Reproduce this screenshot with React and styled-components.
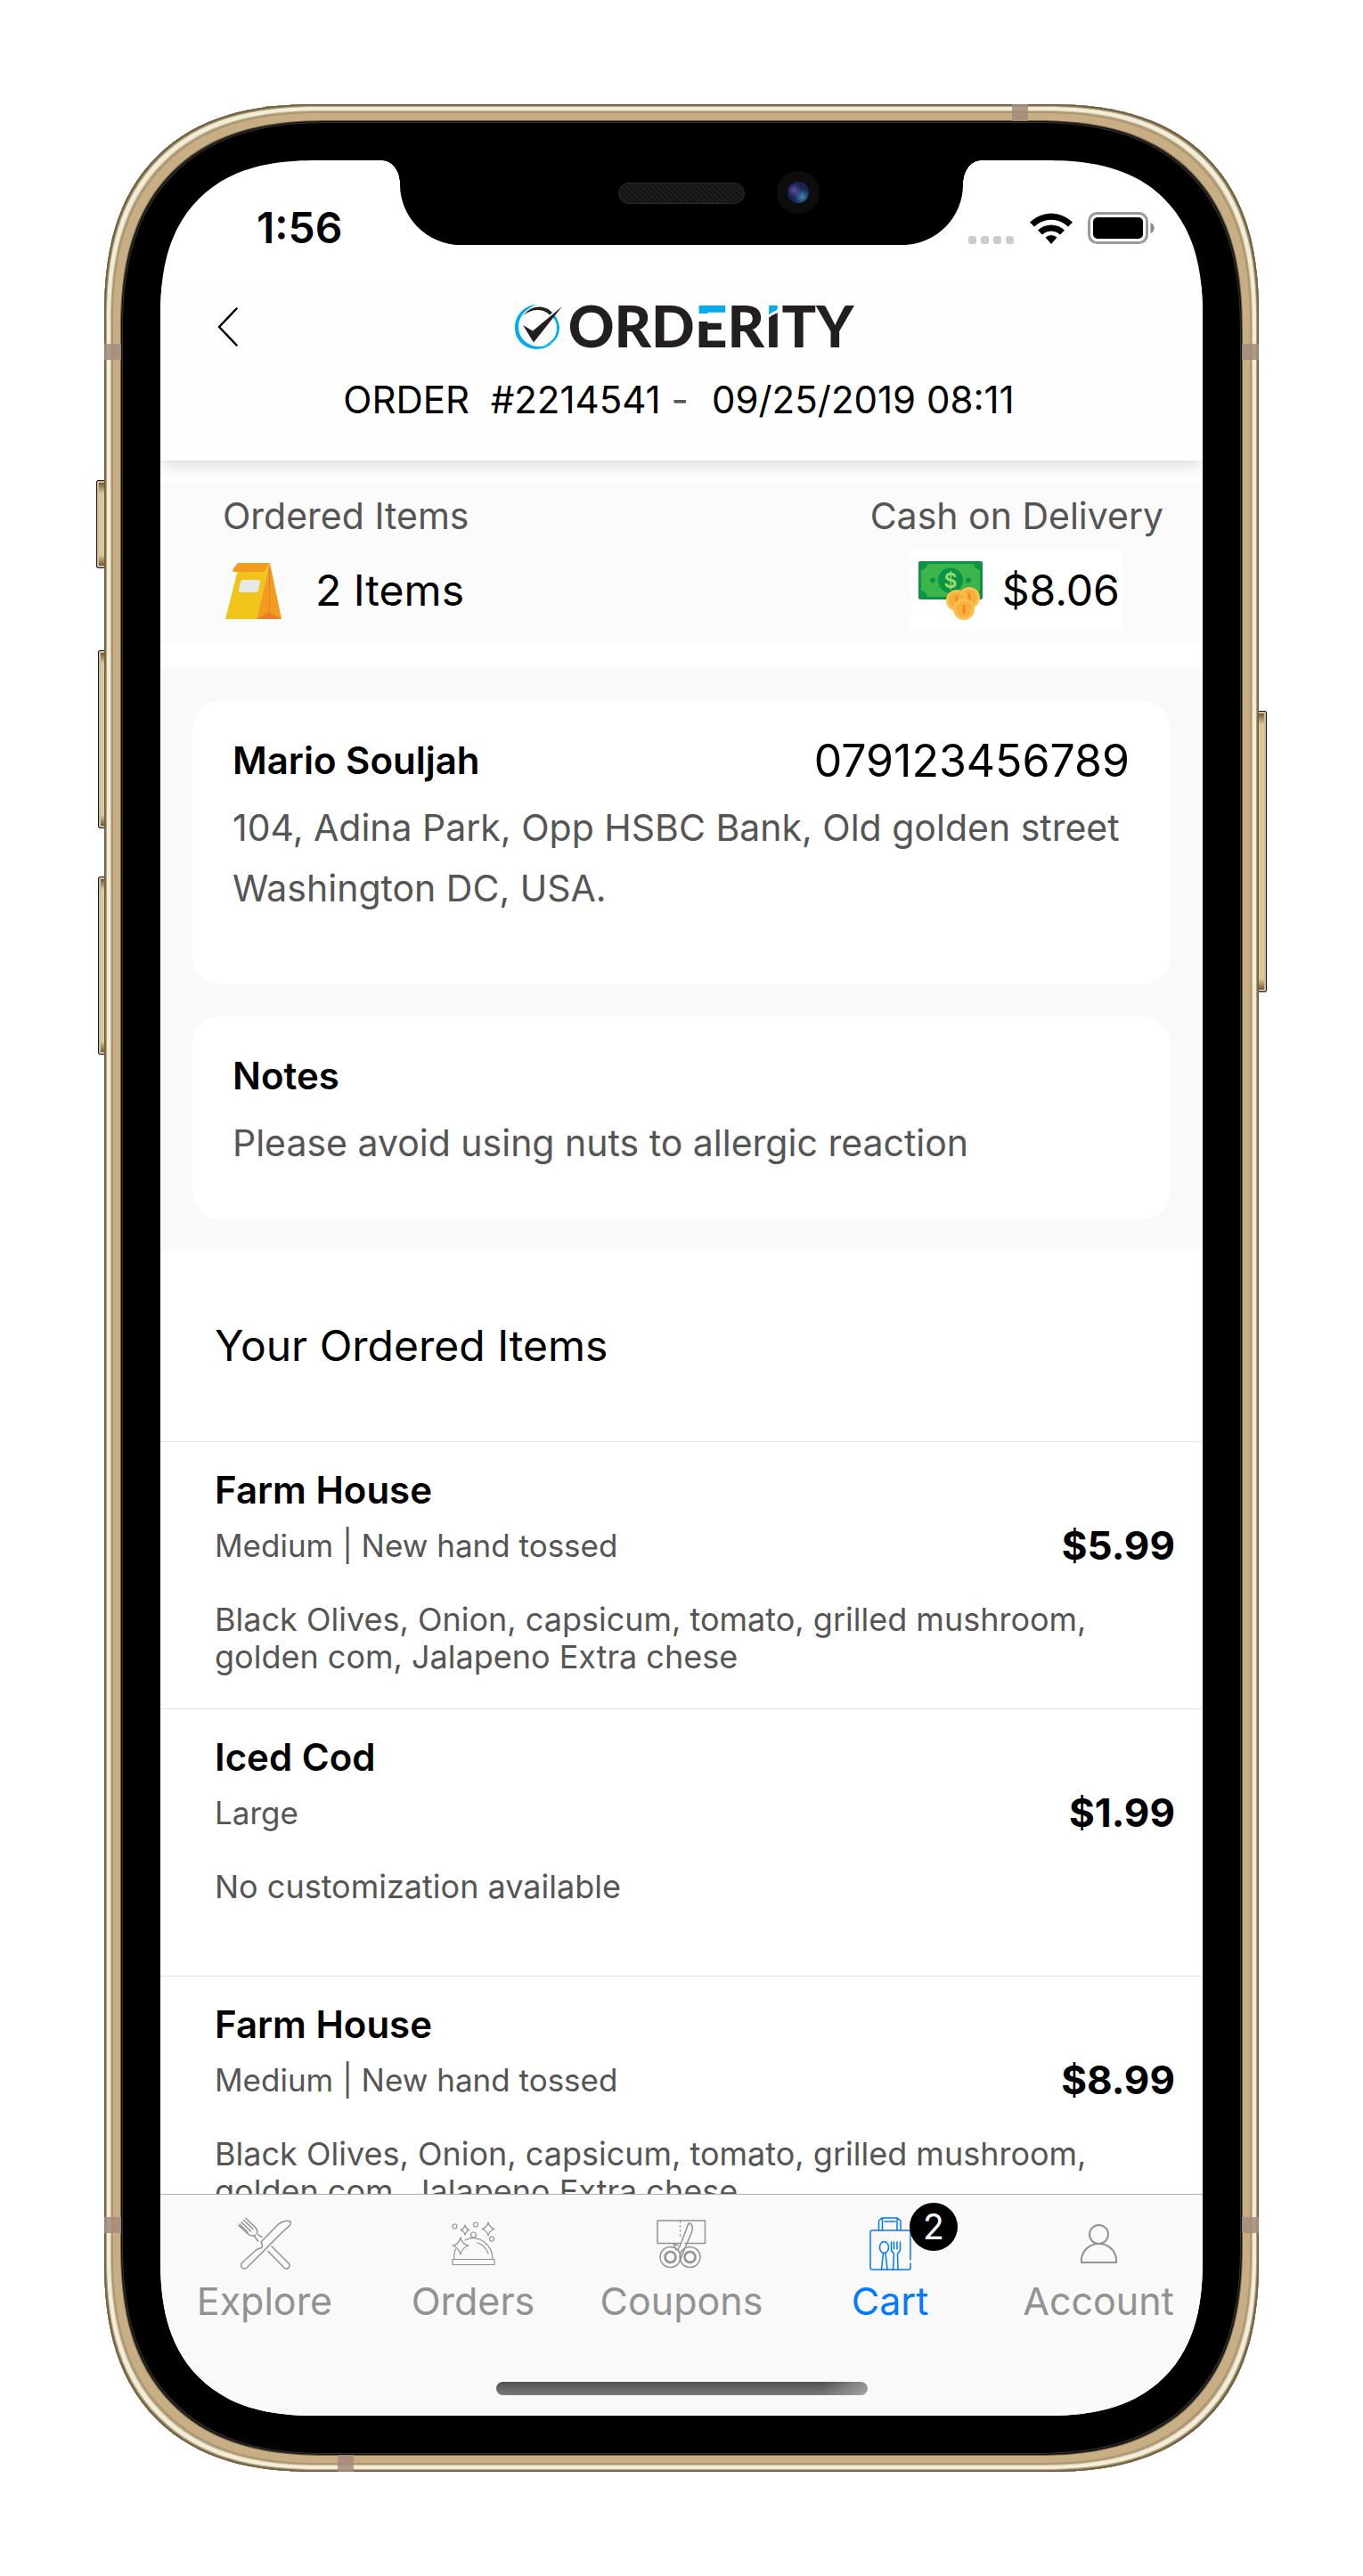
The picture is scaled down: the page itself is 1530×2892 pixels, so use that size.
import React from "react";
import styled, { createGlobalStyle, css } from "styled-components";

const GlobalStyle = createGlobalStyle`
  *, *::before, *::after { box-sizing: border-box; }
  body {
    margin: 0;
    background: #ffffff;
    color: #000000;
    font-family: Inter, "Liberation Sans", sans-serif;
  }
  h1, h2, h3, p, ul, dl, dd { margin: 0; padding: 0; }
  ul { list-style: none; }
`;

const Page = styled.div`
  display: flex;
  justify-content: center;
  padding: 117px;
`;

/* ---------- device ---------- */

const Phone = styled.div`
  position: relative;
  width: 100%;
  max-width: 1296px;
  padding: 63px;
`;

const Shell = styled.div`
  position: absolute;
  inset: 0;
  border-radius: 200px;
  background: #000000;
  box-shadow:
    inset 0 0 0 1px #6b5c3f,
    inset 0 0 0 2px #85734f,
    inset 0 0 0 3px #b0a27e,
    inset 0 0 0 7px #f2edd8,
    inset 0 0 0 8px #c8bc9c,
    inset 0 0 0 10px #ad9670,
    inset 0 0 0 18px #c8ae84,
    inset 0 0 0 19px #6e5c43,
    inset 0 0 0 20px #0d0d0d,
    inset 0 0 0 21px #333333;

  @supports (corner-shape: superellipse(1.3)) {
    border-radius: 240px;
    corner-shape: superellipse(1.3);
  }
`;

const SideButton = styled.span`
  position: absolute;
  top: ${(p) => p.$top}px;
  ${(p) => p.$side}: -${(p) => p.$depth}px;
  width: ${(p) => p.$depth + 4}px;
  height: ${(p) => p.$length}px;
  border: 1px solid #1c1a17;
  border-radius: 2px;
  background: linear-gradient(#5f4a1f, #dcc898 14px, #dcc898 calc(100% - 14px), #5f4a1f);
  box-shadow: inset 0 0 0 2px #cdb9a6;
`;

const Antenna = styled.span`
  position: absolute;
  background: rgba(165, 140, 125, 0.85);
  ${(p) => p.$edge}: 0;
  ${(p) =>
    p.$edge === "left" || p.$edge === "right"
      ? css`
          top: ${p.$at}px;
          width: 19px;
          height: 18px;
        `
      : css`
          left: ${p.$at}px;
          width: 18px;
          height: 19px;
        `}
`;

const Screen = styled.div`
  position: relative;
  display: flex;
  flex-direction: column;
  aspect-ratio: 1170 / 2532;
  overflow: hidden;
  border-radius: 142px;
  background: #ffffff;

  @supports (corner-shape: superellipse(1.3)) {
    border-radius: 176px;
    corner-shape: superellipse(1.3);
  }
`;

const Notch = styled.div`
  position: absolute;
  z-index: 3;
  top: 0;
  left: 50%;
  width: 632px;
  height: 95px;
  margin-left: -316px;
  border-radius: 0 0 68px 68px;
  background: #000000;

  &::before,
  &::after {
    content: "";
    position: absolute;
    top: 0;
    width: 20px;
    height: 26px;
  }
  &::before {
    right: 100%;
    background: radial-gradient(ellipse 20px 26px at 0 100%, transparent 98%, #000000 100%);
  }
  &::after {
    left: 100%;
    background: radial-gradient(ellipse 20px 26px at 100% 100%, transparent 98%, #000000 100%);
  }
`;

const Speaker = styled.span`
  position: absolute;
  top: 25px;
  left: 245px;
  width: 142px;
  height: 24px;
  border: 1px solid #2c2c2c;
  border-radius: 12px;
  background: repeating-linear-gradient(45deg, #141414 0 2px, #1e1e1e 2px 4px);
`;

const Camera = styled.span`
  position: absolute;
  top: 12px;
  left: 423px;
  width: 48px;
  height: 48px;
  border: 12px solid #0d0d0e;
  border-radius: 50%;
  background:
    radial-gradient(circle at 32% 40%, #6a4aa8 0, transparent 34%),
    radial-gradient(circle at 68% 70%, #3f87ad 0, transparent 40%),
    #16264f;
`;

/* ---------- status bar ---------- */

const StatusBar = styled.div`
  display: flex;
  justify-content: space-between;
  align-items: center;
  height: 141px;
  padding: 10px 53px 0 108px;
`;

const Clock = styled.span`
  font-size: 48px;
  font-weight: 600;
  line-height: 56px;
`;

const StatusIcons = styled.span`
  display: flex;
  align-items: flex-end;
  gap: 17px;
`;

/* ---------- header ---------- */

const Header = styled.header`
  position: relative;
  z-index: 1;
  padding-bottom: 40px;
  background: #fefefe;
  box-shadow: 0 8px 16px -2px rgba(0, 0, 0, 0.14);
`;

const HeaderBar = styled.div`
  display: grid;
  grid-template-columns: 1fr auto 1fr;
  align-items: center;
  height: 92px;
`;

const BackButton = styled.button`
  display: flex;
  justify-self: start;
  padding: 20px 20px 20px 64px;
  border: 0;
  background: none;
  cursor: pointer;
`;

const Logo = styled.div`
  display: flex;
  align-items: center;
  gap: 6px;
  padding-left: 6px;
`;

const Wordmark = styled.span`
  padding-bottom: 3px;
  color: #231f20;
  font-family: Lato, "Liberation Sans", sans-serif;
  font-size: 64px;
  font-weight: 900;
  line-height: 62px;
`;

const AccentLetter = styled.span`
  background: ${(p) => p.$fill};
  background-clip: text;
  -webkit-background-clip: text;
  color: transparent;
`;

const OrderLine = styled.p`
  display: flex;
  justify-content: center;
  margin-top: 8px;
  padding-right: 6px;
  font-size: 42px;
  line-height: 56px;
  white-space: pre;
`;

const Dash = styled.span`
  padding: 0 26px 0 12px;
  color: #555555;
`;

/* ---------- summary ---------- */

const Summary = styled.dl`
  display: flex;
  justify-content: space-between;
  margin-top: 24px;
  padding: 10px 44px 15px 70px;
  background: #fbfbfb;
`;

const SummaryCell = styled.div`
  display: flex;
  flex-direction: column;
  align-items: ${(p) => p.$align};
  gap: 9px;
`;

const SummaryLabel = styled.dt`
  color: #555555;
  font-size: 41px;
  line-height: 56px;
`;

const SummaryValue = styled.dd`
  display: flex;
  align-items: center;
  gap: ${(p) => p.$gap}px;
  height: 90px;
  padding: 4px 4px 0 ${(p) => (p.$boxed ? 9 : 3)}px;
  background: ${(p) => (p.$boxed ? "#ffffff" : "transparent")};
  font-size: 48px;
  line-height: 60px;
`;

/* ---------- details ---------- */

const Details = styled.section`
  display: flex;
  flex-direction: column;
  gap: 36px;
  margin-top: 30px;
  padding: 36px;
  background: #f9f9f9;
`;

const Card = styled.article`
  padding: 37px 46px 0 45px;
  min-height: ${(p) => p.$min}px;
  border-radius: 32px;
  background: #ffffff;
`;

const CardHead = styled.div`
  display: flex;
  justify-content: space-between;
  align-items: center;
  margin-bottom: 11px;
`;

const CardTitle = styled.h2`
  font-size: 42px;
  font-weight: 600;
  line-height: 60px;
`;

const CardPhone = styled.a`
  color: inherit;
  font-size: 50px;
  line-height: 60px;
  text-decoration: none;
`;

const CardText = styled.p`
  color: #555555;
  font-size: 41px;
  line-height: 68px;
`;

/* ---------- ordered items ---------- */

const Content = styled.main`
  flex: 1;
  min-height: 0;
  overflow: hidden;
`;

const ListHeading = styled.h1`
  padding: 76px 61px 77px;
  font-size: 48px;
  font-weight: 400;
  line-height: 60px;
`;

const Item = styled.li`
  display: grid;
  grid-template-columns: 1fr auto;
  align-content: start;
  min-height: 300px;
  padding: 26px 31px 0 61px;
  border-top: 1px solid #e2e2e2;
`;

const ItemName = styled.h3`
  grid-column: 1 / -1;
  font-size: 42px;
  font-weight: 600;
  line-height: 56px;
`;

const ItemVariant = styled.p`
  margin-top: 12px;
  color: #555555;
  font-size: 35px;
  line-height: 44px;
`;

const ItemPrice = styled.p`
  margin-top: 12px;
  font-size: 44px;
  font-weight: 700;
  line-height: 44px;
`;

const ItemNote = styled.p`
  grid-column: 1 / -1;
  margin-top: 40px;
  padding-right: 60px;
  color: #555555;
  font-size: 36px;
  line-height: 42px;
`;

/* ---------- tab bar ---------- */

const TabBar = styled.footer`
  border-top: 1px solid #b2b2b2;
  padding-bottom: 23px;
  background: #f9f9f9;
`;

const Tabs = styled.nav`
  display: grid;
  grid-template-columns: repeat(5, 1fr);
  padding-top: 25px;
`;

const Tab = styled.a`
  display: flex;
  flex-direction: column;
  align-items: center;
  gap: 6px;
  color: ${(p) => (p.$active ? "#007aff" : "#929292")};
  font-size: 43px;
  line-height: 56px;
  text-decoration: none;
`;

const TabIcon = styled.span`
  position: relative;
  display: flex;
  justify-content: center;
  align-items: center;
  width: 60px;
  height: 60px;
`;

const Badge = styled.span`
  position: absolute;
  top: -16px;
  left: 52px;
  width: 54px;
  height: 54px;
  border-radius: 50%;
  background: #000000;
  color: #ffffff;
  font-size: 39px;
  line-height: 54px;
  text-align: center;
`;

const HomeIndicator = styled.div`
  width: 417px;
  height: 15px;
  margin: 63px auto 0;
  border-radius: 8px;
  background:
    linear-gradient(90deg, transparent 88%, rgba(190, 190, 190, 0.6)),
    linear-gradient(#505050, #7a7a7a);
`;

/* ---------- drawings ---------- */

const SignalDots = () => (
  <svg width="52" height="36" viewBox="0 0 52 36" fill="#cccccc" aria-hidden="true">
    <rect x="0" y="27" width="9" height="9" rx="3" />
    <rect x="14" y="27" width="9" height="9" rx="3" />
    <rect x="28" y="27" width="9" height="9" rx="3" />
    <rect x="42" y="27" width="9" height="9" rx="3" />
  </svg>
);

const WifiMark = () => (
  <svg width="48" height="36" viewBox="0 0 48 36" aria-hidden="true">
    <path d="M0 11.5A34 34 0 0 1 48 11.5L43 16.500A27 27 0 0 0 5 16.500Z" />
    <path d="M9 20.500A21.500 21.500 0 0 1 39 20.500L34 25.500A14.500 14.500 0 0 0 14 25.500Z" />
    <path d="M17.500 28.500A9.500 9.500 0 0 1 30.500 28.500L24 36Z" />
  </svg>
);

const BatteryMark = () => (
  <svg width="76" height="36" viewBox="0 0 76 36" aria-hidden="true">
    <rect x="1.500" y="1.500" width="65" height="33" rx="9" fill="none" stroke="#999999" strokeWidth="3" />
    <rect x="6" y="6" width="56" height="24" rx="5" />
    <path d="M70.500 12C76 14 76 22 70.500 24Z" fill="#888888" />
  </svg>
);

const Chevron = () => (
  <svg width="23" height="44" viewBox="0 0 23 44" fill="none" stroke="#000000" strokeWidth="2.500" strokeLinecap="round" strokeLinejoin="round" aria-hidden="true">
    <path d="M21.500 1.500L2 22L21.500 42.500" />
  </svg>
);

const LogoMark = () => (
  <svg width="54" height="50" viewBox="0 0 54 50" aria-hidden="true">
    <path fill="#00aeef" d="M24 0C10 1 0 12 0 26C0 40 11 50 25 50C32 50 39 47 42 43C36 46 31 47.500 26 47C14 46.500 5 38 4 27C3 15 11 5 24 0Z" />
    <path fill="#00aeef" d="M44.500 11.500C52 21 52 34 43 42C39 45 36 45.500 33 46C43 41 47 35 47 26C47 21 45.500 17 42.500 14.500Z" />
    <path fill="#231f20" d="M10 12C18 0 34 0 42 9L39 11.500C31 4 19 4.500 10 12Z" />
    <path fill="#231f20" d="M9 23L20 29.500L53 2L21 42.500Z" />
  </svg>
);

const PaperBag = () => (
  <svg width="63" height="63" viewBox="0 0 63 63" aria-hidden="true">
    <path fill="#f0c419" d="M14 8H43L50 0L35 63H0Z" />
    <path fill="#f29c1f" d="M50 0L63 63H35Z" />
    <path fill="#e57e25" d="M49 4L50 4V56L63 63H35L49 55Z" />
    <path fill="#f29c1f" d="M14 0H50L43 10H9Q7 8 10 5Z" />
    <path fill="#e6e7e9" d="M20 19H38Q40 20 39 22L37 31Q36 33 34 33H16Q14 32 15 30L17 21Q18 19 20 19Z" />
  </svg>
);

const Coin = ({ x, y }) => (
  <g>
    <circle cx={x} cy={y} r="12" fill="#fdc04f" />
    <circle cx={x} cy={y} r="9" fill="#f8ae40" />
    <path d={`M${x} ${y - 4}V${y + 4}`} stroke="#f28a1c" strokeWidth="3" strokeLinecap="round" />
  </g>
);

const DollarGlyph = styled.text`
  fill: #9fdc6c;
  font-family: Inter, sans-serif;
  font-size: 23px;
  font-weight: 600;
  text-anchor: middle;
`;

const Cash = () => (
  <svg width="72" height="67" viewBox="0 0 72 67" aria-hidden="true">
    <rect width="72" height="43" rx="2" fill="#0b9447" />
    <path fill="#3cb54a" d="M10 3H62Q63 9 69 10V33Q63 34 62 40H10Q9 34 3 33V10Q9 9 10 3Z" />
    <circle cx="36" cy="21.500" r="14" fill="#0b9447" />
    <circle cx="16" cy="21.500" r="3" fill="#0b9447" />
    <circle cx="56" cy="21.500" r="3" fill="#0b9447" />
    <DollarGlyph x="36" y="30">$</DollarGlyph>
    <Coin x={57} y={41} />
    <Coin x={43} y={44} />
    <Coin x={51} y={54} />
  </svg>
);

const line = { fill: "none", stroke: "currentColor", strokeWidth: 1.5, strokeLinejoin: "round", strokeLinecap: "round", "aria-hidden": true };

const ExploreIcon = () => (
  <svg width="60" height="60" viewBox="0 0 60 60" {...line}>
    <path d="M59 5C55 3 49 5 45 8.500L26 28C28 31 28 35 25 35L21 36.500L5 51C1.500 55 6 60.500 10 57L52 15C57 11 60 9 59 5Z" />
    <path d="M9 1.500L20 12Q22 14 21.500 18Q23 21 27 22.500M1 9.500L12 19.500Q14 21.500 18 21Q20 23 22.500 27" />
    <path d="M6.500 3.500L17 13.500M4 6L14.500 16M2 8L11 17M18 21.500L20 20" />
    <path d="M38 33L57 52C60 56 55 60 52 57L34 38.500" />
  </svg>
);

const OrdersIcon = () => (
  <svg width="49" height="50" viewBox="0 0 49 50" {...line} strokeWidth={1.2}>
    <rect x="1" y="42.500" width="47" height="6" />
    <path d="M2.500 42.500C2.500 37 3 34 4.500 31M15 21C29 14 46 25 46 42.500M28.500 24C35 25.500 39 30 41 36" />
    <path d="M10 18Q12 26 19 27Q12 29 10 37Q8 29 1 27Q8 26 10 18Z" />
    <path d="M15 4Q16 8.500 20 9.500Q16 10.500 15 15Q14 10.500 10 9.500Q14 8.500 15 4Z" />
    <path d="M41 1Q42.500 7 48 8.500Q42.500 10 41 16Q39.500 10 34 8.500Q39.500 7 41 1Z" />
    <circle cx="24.500" cy="15" r="3" />
    <circle cx="3.500" cy="5.500" r="2.500" />
    <circle cx="27" cy="3.500" r="2.500" />
    <circle cx="45" cy="19.500" r="2.500" />
  </svg>
);

const CouponsIcon = () => (
  <svg width="56" height="55" viewBox="0 0 56 55" {...line}>
    <path d="M32 26.500H54.500V1H1V26.500H27" />
    <path d="M26.500 2V18" strokeDasharray="1 4" />
    <path d="M36 4C40 4 41.500 9 39 15L31 34L26 47M36 4L26 30L24 34M19 27L22 34M19 27L24 29" />
    <circle cx="15.500" cy="42" r="11.500" />
    <circle cx="15.500" cy="42" r="6" strokeWidth="2.500" />
    <circle cx="37.500" cy="42" r="11.500" />
    <circle cx="37.500" cy="42" r="6" strokeWidth="2.500" />
  </svg>
);

const CartIcon = () => (
  <svg width="47" height="60" viewBox="0 0 47 60" {...line}>
    <path d="M46 48V17Q46 15 44 15H3Q1 15 1 17V57Q1 59 3 59H44Q46 59 46 57V52" />
    <path d="M10.500 15V4L14 1H31L35 4V15M14.500 15V1.500M31 15V1.500M17 5H29" />
    <path d="M15.500 40L13.500 59M18 40L20 59" />
    <ellipse cx="16.500" cy="34" rx="5" ry="6.500" />
    <path d="M24.500 28V36Q24.500 39 27.500 41L26.500 59M34.500 28V36Q34.500 39 31.500 41L32 59M27.500 28V36M31 28V36" />
  </svg>
);

const AccountIcon = () => (
  <svg width="41" height="44" viewBox="0 0 41 44" {...line} strokeWidth={2}>
    <circle cx="20.500" cy="11.500" r="10.500" />
    <path d="M1 43V38C3 29 10 22 20.500 22S38 29 40 38V43Z" />
  </svg>
);

/* ---------- data ---------- */

const pizzaNote = "Black Olives, Onion, capsicum, tomato, grilled mushroom, golden com, Jalapeno Extra chese";

const items = [
  { name: "Farm House", variant: "Medium | New hand tossed", price: "$5.99", note: pizzaNote },
  { name: "Iced Cod", variant: "Large", price: "$1.99", note: "No customization available" },
  { name: "Farm House", variant: "Medium | New hand tossed", price: "$8.99", note: pizzaNote },
];

const tabs = [
  { label: "Explore", Icon: ExploreIcon },
  { label: "Orders", Icon: OrdersIcon },
  { label: "Coupons", Icon: CouponsIcon },
  { label: "Cart", Icon: CartIcon, active: true, count: 2 },
  { label: "Account", Icon: AccountIcon },
];

export default function App() {
  return (
    <>
      <GlobalStyle />
      <Page>
        <Phone>
          <SideButton $side="left" $top={422} $depth={9} $length={99} />
          <SideButton $side="left" $top={613} $depth={7} $length={200} />
          <SideButton $side="left" $top={867} $depth={7} $length={200} />
          <SideButton $side="right" $top={681} $depth={9} $length={316} />
          <Shell />
          <Antenna $edge="left" $at={269} />
          <Antenna $edge="right" $at={269} />
          <Antenna $edge="left" $at={2372} />
          <Antenna $edge="right" $at={2372} />
          <Antenna $edge="top" $at={1019} />
          <Antenna $edge="bottom" $at={262} />

          <Screen>
            <Notch>
              <Speaker />
              <Camera />
            </Notch>

            <StatusBar>
              <Clock>1:56</Clock>
              <StatusIcons>
                <SignalDots />
                <WifiMark />
                <BatteryMark />
              </StatusIcons>
            </StatusBar>

            <Header>
              <HeaderBar>
                <BackButton type="button" aria-label="Back">
                  <Chevron />
                </BackButton>
                <Logo>
                  <LogoMark />
                  <Wordmark>
                    ORD
                    <AccentLetter $fill="linear-gradient(#00aeef 0 25px, transparent 25px 34px, #231f20 34px)">E</AccentLetter>
                    R
                    <AccentLetter $fill="linear-gradient(150deg, #00aeef 0 25px, transparent 25px 28px, #231f20 28px)">I</AccentLetter>
                    TY
                  </Wordmark>
                </Logo>
              </HeaderBar>
              <OrderLine>
                <span>{"ORDER  #2214541"}</span>
                <Dash>-</Dash>
                <span>09/25/2019 08:11</span>
              </OrderLine>
            </Header>

            <Content>
              <Summary>
                <SummaryCell $align="flex-start">
                  <SummaryLabel>Ordered Items</SummaryLabel>
                  <SummaryValue $gap={38}>
                    <PaperBag />
                    2 Items
                  </SummaryValue>
                </SummaryCell>
                <SummaryCell $align="center">
                  <SummaryLabel>Cash on Delivery</SummaryLabel>
                  <SummaryValue $gap={22} $boxed>
                    <Cash />
                    $8.06
                  </SummaryValue>
                </SummaryCell>
              </Summary>

              <Details>
                <Card $min={318}>
                  <CardHead>
                    <CardTitle>Mario Souljah</CardTitle>
                    <CardPhone href="tel:079123456789">079123456789</CardPhone>
                  </CardHead>
                  <CardText>
                    104, Adina Park, Opp HSBC Bank, Old golden street
                    <br />
                    Washington DC, USA.
                  </CardText>
                </Card>
                <Card $min={228}>
                  <CardHead>
                    <CardTitle>Notes</CardTitle>
                  </CardHead>
                  <CardText>Please avoid using nuts to allergic reaction</CardText>
                </Card>
              </Details>

              <ListHeading>Your Ordered Items</ListHeading>
              <ul>
                {items.map((item, index) => (
                  <Item key={index}>
                    <ItemName>{item.name}</ItemName>
                    <ItemVariant>{item.variant}</ItemVariant>
                    <ItemPrice>{item.price}</ItemPrice>
                    <ItemNote>{item.note}</ItemNote>
                  </Item>
                ))}
              </ul>
            </Content>

            <TabBar>
              <Tabs>
                {tabs.map(({ label, Icon, active, count }) => (
                  <Tab key={label} href={`#${label.toLowerCase()}`} $active={active}>
                    <TabIcon>
                      <Icon />
                      {count && <Badge>{count}</Badge>}
                    </TabIcon>
                    {label}
                  </Tab>
                ))}
              </Tabs>
              <HomeIndicator />
            </TabBar>
          </Screen>
        </Phone>
      </Page>
    </>
  );
}
